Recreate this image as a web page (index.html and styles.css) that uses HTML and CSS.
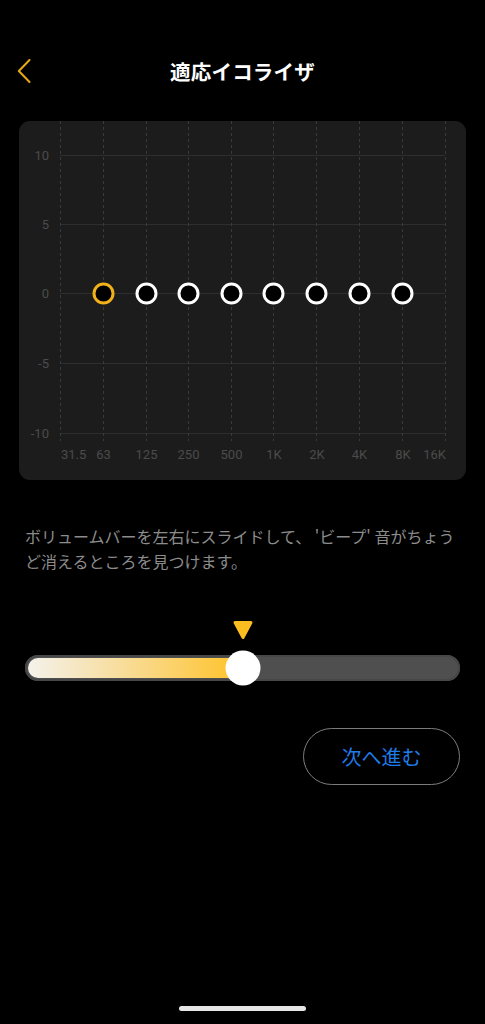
FILE: index.html
```html
<!DOCTYPE html>
<html lang="ja">
<head>
<meta charset="utf-8">
<title>適応イコライザ</title>
<link rel="stylesheet" href="styles.css">
</head>
<body>
<div class="screen">
  <header class="topbar">
    <button class="back" aria-label="戻る">
      <svg width="14" height="24" viewBox="0 0 14 24"><path d="M12.5 1 L1.8 12 L12.5 23" fill="none" stroke="#e6a817" stroke-width="2" stroke-linecap="round" stroke-linejoin="round"/></svg>
    </button>
    <h1 class="title">適応イコライザ</h1>
    <span></span>
  </header>

  <section class="eq-card">
    <svg class="eq-chart" width="447" height="359" viewBox="0 0 447 359">
      <g class="hgrid" stroke="#2e2e2e" stroke-width="1">
        <line x1="41" y1="34.5" x2="426" y2="34.5"/>
        <line x1="41" y1="103.5" x2="426" y2="103.5"/>
        <line x1="41" y1="172.5" x2="426" y2="172.5"/>
        <line x1="41" y1="242.5" x2="426" y2="242.5"/>
        <line x1="41" y1="312.5" x2="426" y2="312.5"/>
      </g>
      <g class="vgrid" stroke="#3a3a3a" stroke-width="1" stroke-dasharray="3 3">
        <line x1="41.5" y1="0" x2="41.5" y2="320"/>
        <line x1="84.5" y1="0" x2="84.5" y2="320"/>
        <line x1="127.5" y1="0" x2="127.5" y2="320"/>
        <line x1="169.5" y1="0" x2="169.5" y2="320"/>
        <line x1="212.5" y1="0" x2="212.5" y2="320"/>
        <line x1="254.5" y1="0" x2="254.5" y2="320"/>
        <line x1="297.5" y1="0" x2="297.5" y2="320"/>
        <line x1="340.5" y1="0" x2="340.5" y2="320"/>
        <line x1="383.5" y1="0" x2="383.5" y2="320"/>
        <line x1="426.5" y1="0" x2="426.5" y2="320"/>
      </g>
      <g class="ylabels" text-anchor="end">
        <text x="30" y="39">10</text>
        <text x="30" y="108">5</text>
        <text x="30" y="177">0</text>
        <text x="30" y="247">-5</text>
        <text x="30" y="317">-10</text>
      </g>
      <g class="xlabels" text-anchor="middle">
        <text x="42" y="338" text-anchor="start">31.5</text>
        <text x="84.5" y="338">63</text>
        <text x="127.5" y="338">125</text>
        <text x="169.5" y="338">250</text>
        <text x="212.5" y="338">500</text>
        <text x="255" y="338">1K</text>
        <text x="298" y="338">2K</text>
        <text x="340.5" y="338">4K</text>
        <text x="384" y="338">8K</text>
        <text x="427" y="338" text-anchor="end">16K</text>
      </g>
      <g class="bands" fill="#000" stroke-width="3">
        <circle cx="84.5" cy="172.5" r="9.5" stroke="#f0b11a"/>
        <circle cx="127.5" cy="172.5" r="9.5" stroke="#fff"/>
        <circle cx="169.5" cy="172.5" r="9.5" stroke="#fff"/>
        <circle cx="212.5" cy="172.5" r="9.5" stroke="#fff"/>
        <circle cx="254.5" cy="172.5" r="9.5" stroke="#fff"/>
        <circle cx="297.5" cy="172.5" r="9.5" stroke="#fff"/>
        <circle cx="340.5" cy="172.5" r="9.5" stroke="#fff"/>
        <circle cx="383.5" cy="172.5" r="9.5" stroke="#fff"/>
      </g>
    </svg>
  </section>

  <p class="hint">ボリュームバーを左右にスライドして、 'ビープ' 音がちょうど消えるところを見つけます。</p>

  <div class="slider" style="--value: 50%">
    <div class="marker">
      <svg width="22" height="20" viewBox="0 0 22 20"><path d="M3 2.5 H19 L11 17.5 Z" fill="#fbbd1f" stroke="#fbbd1f" stroke-width="3" stroke-linejoin="round"/></svg>
    </div>
    <div class="track">
      <div class="fill"></div>
      <div class="thumb"></div>
    </div>
  </div>

  <div class="actions">
    <button class="next">次へ進む</button>
  </div>

  <div class="home-indicator"></div>
</div>
</body>
</html>
```

FILE: styles.css
```css
* {
  box-sizing: border-box;
}

html, body {
  margin: 0;
  padding: 0;
  background: #000;
}

body {
  font-family: "Noto Sans CJK JP", "Noto Sans", sans-serif;
  color: #fff;
}

.screen {
  position: relative;
  width: 485px;
  height: 1024px;
  padding: 0 19px;
  overflow: hidden;
}

.topbar {
  display: grid;
  grid-template-columns: 1fr auto 1fr;
  align-items: center;
  height: 42px;
  margin-top: 50px;
}

.back {
  justify-self: start;
  display: flex;
  align-items: center;
  padding: 0;
  margin-left: -2px;
  border: 0;
  background: none;
  height: 24px;
}

.back svg {
  display: block;
}

.title {
  margin: 0;
  font-size: 20.5px;
  font-weight: 700;
  line-height: 42px;
  color: #fff;
  letter-spacing: 0.2px;
}

.eq-card {
  margin-top: 29px;
  height: 359px;
  background: #1c1c1c;
  border-radius: 11px;
  overflow: hidden;
}

.eq-chart {
  display: block;
}

.eq-chart text {
  font-family: Roboto, "Noto Sans", sans-serif;
  font-size: 13px;
  fill: #4b4b4b;
}

.hint {
  margin: 44px 0 0;
  padding: 0 6px;
  font-size: 16px;
  line-height: 25px;
  color: #8c8c8c;
}

.slider {
  position: relative;
  margin: 46px 6px 0;
}

.marker {
  height: 19px;
  margin-bottom: 16px;
  position: relative;
}

.marker svg {
  position: absolute;
  left: var(--value);
  top: 0;
  transform: translateX(-50%);
}

.track {
  position: relative;
  height: 26px;
  border-radius: 13px;
  background: #4f4f4f;
  box-shadow: inset 0 0 0 2px #474747;
}

.fill {
  position: absolute;
  left: 3px;
  top: 3px;
  bottom: 3px;
  width: calc(var(--value) - 3px);
  border-radius: 10px 0 0 10px;
  background: linear-gradient(90deg, #f4f2ec 0%, #f8dc98 45%, #ffc227 100%);
}

.thumb {
  position: absolute;
  top: 50%;
  left: var(--value);
  width: 35px;
  height: 35px;
  border-radius: 50%;
  background: #fff;
  transform: translate(-50%, -50%);
}

.actions {
  display: flex;
  justify-content: flex-end;
  margin-top: 47px;
  padding-right: 6px;
}

.next {
  width: 157px;
  height: 57px;
  border: 1.5px solid #7c7c7c;
  border-radius: 29px;
  background: transparent;
  color: #1f7be6;
  font-family: "Noto Sans CJK JP", sans-serif;
  font-size: 20px;
  padding: 0;
}

.home-indicator {
  position: absolute;
  left: 179px;
  bottom: 13px;
  width: 127px;
  height: 5px;
  border-radius: 3px;
  background: #e6e6e6;
}
```
